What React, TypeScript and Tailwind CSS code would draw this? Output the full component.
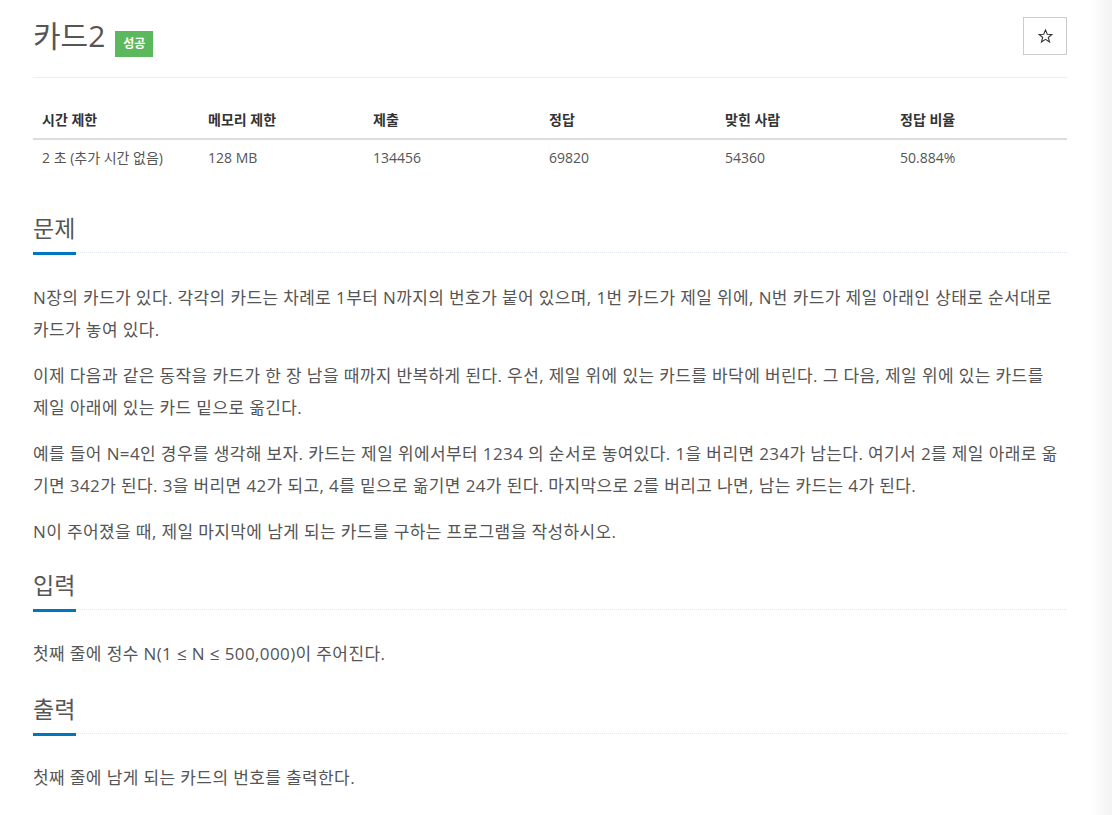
import React from "react";

const font = { fontFamily: '"Open Sans", "Noto Sans CJK KR", sans-serif' };

const stats = [
  { head: "시간 제한", value: "2 초 (추가 시간 없음)", w: "w-[166px]" },
  { head: "메모리 제한", value: "128 MB", w: "w-[165px]" },
  { head: "제출", value: "134456", w: "w-[176px]" },
  { head: "정답", value: "69820", w: "w-[176px]" },
  { head: "맞힌 사람", value: "54360", w: "w-[175px]" },
  { head: "정답 비율", value: "50.884%", w: "w-[176px]" },
];

const Headline = ({ title }: { title: string }) => (
  <div className="border-b border-dotted border-[#e4e9f0]">
    <h2 className="inline-block mb-[-3px] border-b-[3px] border-[#0076c0] text-[23px] leading-[34px] pb-[7px] pr-[1px] text-[#555]">
      {title}
    </h2>
  </div>
);

const App: React.FC = () => {
  return (
    <div className="flex min-h-screen bg-white text-[#555]" style={font}>
      <div className="flex-1 pl-[33px] pr-[23px]">
        {/* Title */}
        <div className="pt-[17px] pb-[22px] border-b border-[#eee] flex justify-between items-start">
          <div className="flex items-center h-[38px]">
            <h1 className="text-[30px] leading-[38px] text-[#555]">카드2</h1>
            <span className="ml-[10px] mt-[16px] h-[26px] w-[38px] flex items-center justify-center bg-[#5cb85c] text-white text-[12px] font-bold">
              성공
            </span>
          </div>
          <button className="h-[38px] w-[44px] border border-[#ccc] bg-white flex items-center justify-center">
            <svg width="15" height="14" viewBox="0 0 24 23" fill="none" stroke="#333" strokeWidth="1.8" strokeLinejoin="miter">
              <path d="M12 1.5 L14.9 8.6 L22.5 9 L16.6 13.9 L18.6 21.3 L12 17.1 L5.4 21.3 L7.4 13.9 L1.5 9 L9.1 8.6 Z" />
            </svg>
          </button>
        </div>

        {/* Stats table */}
        <table className="mt-[24px] w-full table-fixed text-[14px]">
          <thead>
            <tr className="border-b-2 border-[#ddd]">
              {stats.map(s => (
                <th key={s.head} className={`${s.w} text-left font-bold text-[#333] px-[9px] py-[8px] leading-[20px]`}>
                  {s.head}
                </th>
              ))}
            </tr>
          </thead>
          <tbody>
            <tr>
              {stats.map(s => (
                <td key={s.head} className="px-[9px] py-[8px] leading-[20px]">
                  {s.value}
                </td>
              ))}
            </tr>
          </tbody>
        </table>

        {/* 문제 */}
        <div className="mt-[35px]">
          <Headline title="문제" />
          <div className="pt-[29px] text-[17px] leading-[32px] tracking-[0.38px] whitespace-nowrap">
            <p className="mb-[14px]">
              N장의 카드가 있다. 각각의 카드는 차례로 1부터 N까지의 번호가 붙어 있으며, 1번 카드가 제일 위에, N번 카드가 제일 아래인 상태로 순서대로
              <br />
              카드가 놓여 있다.
            </p>
            <p className="mb-[14px]">
              이제 다음과 같은 동작을 카드가 한 장 남을 때까지 반복하게 된다. 우선, 제일 위에 있는 카드를 바닥에 버린다. 그 다음, 제일 위에 있는 카드를
              <br />
              제일 아래에 있는 카드 밑으로 옮긴다.
            </p>
            <p className="mb-[14px]">
              예를 들어 N=4인 경우를 생각해 보자. 카드는 제일 위에서부터 1234 의 순서로 놓여있다. 1을 버리면 234가 남는다. 여기서 2를 제일 아래로 옮
              <br />
              기면 342가 된다. 3을 버리면 42가 되고, 4를 밑으로 옮기면 24가 된다. 마지막으로 2를 버리고 나면, 남는 카드는 4가 된다.
            </p>
            <p>N이 주어졌을 때, 제일 마지막에 남게 되는 카드를 구하는 프로그램을 작성하시오.</p>
          </div>
        </div>

        {/* 입력 */}
        <div className="mt-[20px]">
          <Headline title="입력" />
          <p className="pt-[28px] text-[17px] leading-[32px] tracking-[0.38px]">첫째 줄에 정수 N(1 ≤ N ≤ 500,000)이 주어진다.</p>
        </div>

        {/* 출력 */}
        <div className="mt-[22px]">
          <Headline title="출력" />
          <p className="pt-[28px] text-[17px] leading-[32px] tracking-[0.38px]">첫째 줄에 남게 되는 카드의 번호를 출력한다.</p>
        </div>
        <div className="h-[40px]" />
      </div>
      <div className="w-[22px] bg-linear-to-r from-white to-[#f3f3f3]" />
    </div>
  );
};

export default App;
